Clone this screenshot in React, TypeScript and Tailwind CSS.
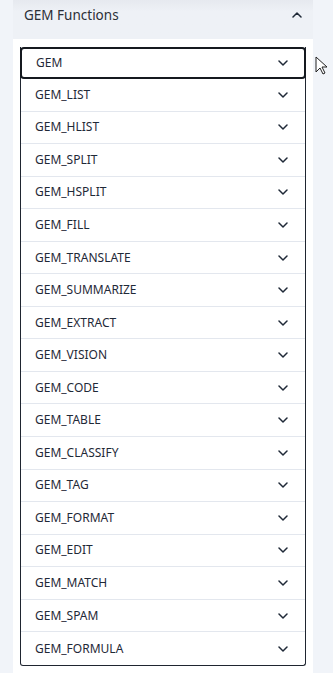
import React from "react";

const items = [
  "GEM_LIST",
  "GEM_HLIST",
  "GEM_SPLIT",
  "GEM_HSPLIT",
  "GEM_FILL",
  "GEM_TRANSLATE",
  "GEM_SUMMARIZE",
  "GEM_EXTRACT",
  "GEM_VISION",
  "GEM_CODE",
  "GEM_TABLE",
  "GEM_CLASSIFY",
  "GEM_TAG",
  "GEM_FORMAT",
  "GEM_EDIT",
  "GEM_MATCH",
  "GEM_SPAM",
  "GEM_FORMULA",
];

function ChevronDown() {
  return (
    <svg width="10" height="6" viewBox="0 0 10 6" fill="none">
      <path d="M1 1l4 4 4-4" stroke="#1f2937" strokeWidth="1.5" strokeLinecap="round" strokeLinejoin="round" />
    </svg>
  );
}

export default function App() {
  return (
    <div
      className="relative w-[333px] h-[673px] overflow-hidden bg-[#f1f4f9]"
      style={{ fontFamily: '"Noto Sans", "Open Sans", sans-serif' }}
    >
      <div className="ml-[13px] w-[300px] h-full flex flex-col">
        <div className="h-[39px] shrink-0 flex items-center justify-between pl-[11px] pr-[11px] pb-[9px] bg-gradient-to-b from-[#e6e9ef] to-[#eef1f6] to-[30%]">
          <span className="text-[13.5px] text-[#2b2f36]">GEM Functions</span>
          <svg width="10" height="6" viewBox="0 0 10 6" fill="none">
            <path d="M1 5l4-4 4 4" stroke="#1f2937" strokeWidth="1.5" strokeLinecap="round" strokeLinejoin="round" />
          </svg>
        </div>
        <div className="flex-1 bg-white pt-[8px] px-[7px]">
          <div className="border-l border-r border-b border-[#1f2530] rounded-b-[3px]">
            <div className="h-[32px] -mx-[1px] border-2 border-[#15191f] rounded-[4px] flex items-center justify-between pl-[14px] pr-[16px]">
              <span className="text-[12px] text-[#1f2937]">GEM</span>
              <ChevronDown />
            </div>
            {items.map((it, i) => (
              <div
                key={it}
                className={
                  "h-[32.55px] flex items-center justify-between pl-[14px] pr-[17px] " +
                  (i < items.length - 1 ? "border-b border-[#e3e7ee]" : "")
                }
              >
                <span className="text-[12px] text-[#1f2937]">{it}</span>
                <ChevronDown />
              </div>
            ))}
          </div>
        </div>
      </div>
      <svg className="absolute left-[315px] top-[56px]" width="14" height="20" viewBox="0 0 14 20">
        <path d="M1 1v15l4-4 3 6 2-1-3-6h5z" fill="white" stroke="#222" strokeWidth="1" strokeLinejoin="round" />
      </svg>
    </div>
  );
}
